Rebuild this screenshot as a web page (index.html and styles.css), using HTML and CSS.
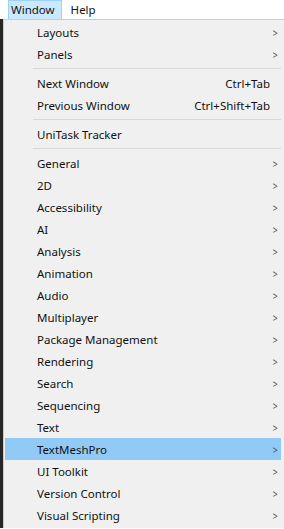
FILE: index.html
```html
<!DOCTYPE html>
<html lang="en">
<head>
  <meta charset="UTF-8">
  <meta name="viewport" content="width=device-width, initial-scale=1.0">
  <title>Window Menu</title>
  <link rel="stylesheet" href="styles.css">
</head>
<body>
  <div class="menubar">
    <span class="menu-title active">Window</span>
    <span class="menu-title">Help</span>
  </div>
  <div class="stage">
    <div class="backdrop"></div>
    <ul class="menu">
      <li class="item"><span>Layouts</span><span class="arrow">&gt;</span></li>
      <li class="item"><span>Panels</span><span class="arrow">&gt;</span></li>
      <li class="sep"></li>
      <li class="item"><span>Next Window</span><span class="key">Ctrl+Tab</span></li>
      <li class="item"><span>Previous Window</span><span class="key">Ctrl+Shift+Tab</span></li>
      <li class="sep"></li>
      <li class="item"><span>UniTask Tracker</span></li>
      <li class="sep"></li>
      <li class="item"><span>General</span><span class="arrow">&gt;</span></li>
      <li class="item"><span>2D</span><span class="arrow">&gt;</span></li>
      <li class="item"><span>Accessibility</span><span class="arrow">&gt;</span></li>
      <li class="item"><span>AI</span><span class="arrow">&gt;</span></li>
      <li class="item"><span>Analysis</span><span class="arrow">&gt;</span></li>
      <li class="item"><span>Animation</span><span class="arrow">&gt;</span></li>
      <li class="item"><span>Audio</span><span class="arrow">&gt;</span></li>
      <li class="item"><span>Multiplayer</span><span class="arrow">&gt;</span></li>
      <li class="item"><span>Package Management</span><span class="arrow">&gt;</span></li>
      <li class="item"><span>Rendering</span><span class="arrow">&gt;</span></li>
      <li class="item"><span>Search</span><span class="arrow">&gt;</span></li>
      <li class="item"><span>Sequencing</span><span class="arrow">&gt;</span></li>
      <li class="item"><span>Text</span><span class="arrow">&gt;</span></li>
      <li class="item hover"><span>TextMeshPro</span><span class="arrow">&gt;</span></li>
      <li class="item"><span>UI Toolkit</span><span class="arrow">&gt;</span></li>
      <li class="item"><span>Version Control</span><span class="arrow">&gt;</span></li>
      <li class="item"><span>Visual Scripting</span><span class="arrow">&gt;</span></li>
    </ul>
  </div>
</body>
</html>
```

FILE: styles.css
```css
html, body {
  margin: 0;
  padding: 0;
  background: #ffffff;
  font-family: "Noto Sans", "Liberation Sans", sans-serif;
  font-size: 11.5px;
  color: #111;
  overflow: hidden;
}
.menubar {
  height: 19px;
  display: flex;
  align-items: stretch;
  padding-left: 8px;
  gap: 6px;
  background: #ffffff;
}
.menu-title {
  display: flex;
  align-items: center;
  padding: 0 6px 0 2px;
  border: 1px solid transparent;
  border-bottom: none;
  line-height: 1;
}
.menu-title.active {
  background: #cce8ff;
  border-color: #99d1ff;
}
.stage {
  display: flex;
}
.backdrop {
  width: 3px;
  background: #262626;
  flex-shrink: 0;
}
.menu {
  list-style: none;
  margin: 0;
  padding: 1px 3px 2px 1px;
  flex: 1;
  background: #f0f0f0;
  border-left: 1px solid #cccccc;
  border-top: 1px solid #cccccc;
}
.item {
  height: 22px;
  display: flex;
  align-items: center;
  justify-content: space-between;
  padding: 0 2px 0 32px;
}
.item.hover {
  background: #91c9f7;
}
.arrow {
  color: #444;
  transform: scaleX(0.75);
}
.key {
  padding-right: 9px;
}
.sep {
  height: 1px;
  background: #d7d7d7;
  margin: 3px 0 3px 28px;
}
```
